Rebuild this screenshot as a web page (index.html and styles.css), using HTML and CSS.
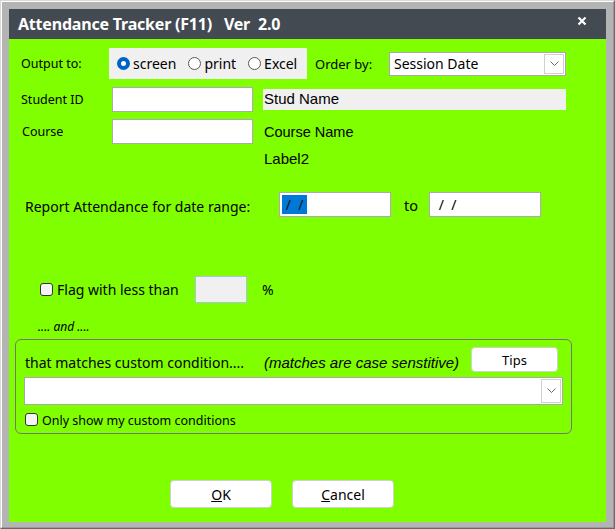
FILE: index.html
```html
<!DOCTYPE html>
<html lang="en">
  <head>
    <meta charset="UTF-8" />
    <title>Attendance Tracker (F11)</title>
    <link rel="stylesheet" href="styles.css">
  </head>
  <body>
    <div class="frame">
      <div class="frame-inner">
        <div class="titlebar">
          <span class="title">Attendance Tracker (F11)&nbsp;&nbsp; Ver&nbsp; 2.0</span>
          <svg class="close" width="10" height="10" viewBox="0 0 10 10">
            <path d="M1.5 1.5 L8.5 8.5 M8.5 1.5 L1.5 8.5" stroke="#fff" stroke-width="2.2" />
          </svg>
        </div>
        <div class="client">
          <div class="row row-output">
            <span class="lbl lbl-output">Output to:</span>
            <div class="radios">
              <span class="radio checked"></span><span class="rtext">screen</span>
              <span class="radio"></span><span class="rtext">print</span>
              <span class="radio"></span><span class="rtext">Excel</span>
            </div>
            <span class="lbl lbl-order">Order by:</span>
            <div class="combo combo-order">
              <span class="combo-text">Session Date</span>
              <span class="drop">
                <svg width="9" height="6" viewBox="0 0 9 6"><path d="M0.5 0.5 L4.5 4.5 L8.5 0.5" fill="none" stroke="#666" stroke-width="1" /></svg>
              </span>
            </div>
          </div>

          <div class="row row-student">
            <span class="lbl lbl-field">Student ID</span>
            <div class="textbox"></div>
            <div class="namebox">Stud Name</div>
          </div>

          <div class="row row-course">
            <span class="lbl lbl-field lbl-course">Course</span>
            <div class="textbox"></div>
            <span class="arial coursename">Course Name</span>
          </div>

          <div class="row row-label2">
            <span class="arial label2">Label2</span>
          </div>

          <div class="row row-date">
            <span class="lbl lbl-date">Report Attendance for date range:</span>
            <div class="datebox"><span class="sel">&nbsp;/&nbsp; /</span></div>
            <span class="lbl lbl-to">to</span>
            <div class="datebox"><span class="plain">&nbsp;/&nbsp; /</span></div>
          </div>

          <div class="row row-flag">
            <span class="check"></span>
            <span class="lbl lbl-flag">Flag with less than</span>
            <div class="pctbox"></div>
            <span class="lbl lbl-pct">%</span>
          </div>

          <div class="row row-and">
            <span class="and">.... and ....</span>
          </div>

          <div class="group">
            <div class="row group-head">
              <span class="lbl lbl-custom">that matches custom condition....</span>
              <span class="arial case">(matches are case senstitive)</span>
              <button class="btn btn-tips">Tips</button>
            </div>
            <div class="combo combo-custom">
              <span class="combo-text"></span>
              <span class="drop">
                <svg width="9" height="6" viewBox="0 0 9 6"><path d="M0.5 0.5 L4.5 4.5 L8.5 0.5" fill="none" stroke="#666" stroke-width="1" /></svg>
              </span>
            </div>
            <div class="row group-check">
              <span class="check small"></span>
              <span class="lbl lbl-only">Only show my custom conditions</span>
            </div>
          </div>

          <div class="row row-buttons">
            <button class="btn btn-main"><u>O</u>K</button>
            <button class="btn btn-main"><u>C</u>ancel</button>
          </div>
        </div>
      </div>
    </div>
  </body>
</html>
```

FILE: styles.css
```css
html,
body {
  margin: 0;
  padding: 0;
  background-color: #b4b4b4;
}

body {
  font-family: "Noto Sans", "Open Sans", sans-serif;
  font-size: 13px;
  color: #000;
}

.frame {
  width: 615px;
  height: 529px;
  box-sizing: border-box;
  border: 1px solid;
  border-color: #d8d8d8 #696969 #696969 #d8d8d8;
}

.frame-inner {
  height: 100%;
  box-sizing: border-box;
  border: 1px solid;
  border-color: #ffffff #9a9a9a #9a9a9a #ffffff;
  padding: 7px 7px 5px 7px;
  background-color: #b4b4b4;
}

.titlebar {
  height: 30px;
  background-color: #434a52;
  display: flex;
  align-items: center;
  justify-content: space-between;
  padding: 0 19px 0 9px;
}

.title {
  color: #fff;
  font-weight: bold;
  font-size: 16px;
  letter-spacing: -0.2px;
}

.close {
  margin-top: -6px;
}

.client {
  height: 483px;
  background-color: #80ff00;
  box-sizing: border-box;
  padding-top: 9px;
}

.row {
  display: flex;
  align-items: center;
}

.lbl {
  white-space: nowrap;
  flex-shrink: 0;
}

.arial {
  font-family: "Liberation Sans", Arial, sans-serif;
  font-size: 15px;
}

/* output row */
.row-output {
  height: 31px;
}

.lbl-output {
  width: 88px;
  margin-left: 12px;
  font-size: 12.5px;
}

.radios {
  width: 198px;
  height: 31px;
  flex-shrink: 0;
  background-color: #f0f0f0;
  display: flex;
  align-items: center;
  box-sizing: border-box;
  padding-left: 8px;
  font-size: 14px;
}

.radio {
  flex-shrink: 0;
  width: 13px;
  height: 13px;
  box-sizing: border-box;
  border: 1px solid #5a5a5a;
  border-radius: 50%;
  background-color: #fff;
  margin-right: 3px;
}

.radio.checked {
  border: 4px solid #0064c4;
  background-color: #fff;
}

.rtext {
  margin-right: 12px;
  white-space: nowrap;
}

.lbl-order {
  margin-left: 8px;
  width: 74px;
}

.combo {
  background-color: #fff;
  border: 1px solid #a8a8a8;
  box-sizing: border-box;
  display: flex;
  align-items: center;
  justify-content: space-between;
}

.combo-order {
  width: 177px;
  height: 24px;
  font-size: 14px;
}

.combo-text {
  padding-left: 4px;
}

.drop {
  flex-shrink: 0;
  width: 20px;
  height: 20px;
  box-sizing: border-box;
  border: 1px solid #d0d0d0;
  margin-right: 1px;
  display: flex;
  align-items: center;
  justify-content: center;
}

/* student / course */
.row-student {
  margin-top: 8px;
  height: 25px;
}

.row-course {
  margin-top: 7px;
  height: 25px;
}

.lbl-field {
  width: 91px;
  margin-left: 12px;
  font-size: 12.5px;
}

.lbl-course {
  margin-left: 13px;
  width: 90px;
}

.textbox {
  width: 141px;
  height: 25px;
  box-sizing: border-box;
  background-color: #fff;
  border: 1px solid #a9a9b8;
}

.namebox {
  margin-left: 10px;
  width: 303px;
  height: 21px;
  background-color: #f0f0f0;
  font-family: "Liberation Sans", Arial, sans-serif;
  font-size: 15px;
  line-height: 20px;
  padding-left: 1px;
  box-sizing: border-box;
}

.coursename {
  margin-left: 11px;
  font-size: 14.5px;
}

.row-label2 {
  margin-top: 4px;
  height: 20px;
}

.label2 {
  margin-left: 255px;
}

/* date range */
.row-date {
  margin-top: 24px;
  height: 25px;
}

.lbl-date {
  margin-left: 16px;
  width: 254px;
  font-size: 14px;
  padding-top: 3px;
}

.datebox {
  width: 112px;
  height: 25px;
  box-sizing: border-box;
  background-color: #fff;
  border: 1px solid #a9a9b8;
  padding: 2px;
  font-size: 14px;
}

.sel {
  display: inline-block;
  background-color: #0078d7;
  color: #111;
  width: 25px;
  height: 19px;
  line-height: 19px;
}

.plain {
  display: inline-block;
  height: 19px;
  line-height: 19px;
  padding-left: 3px;
}

.lbl-to {
  width: 25px;
  margin-left: 13px;
  font-size: 14.5px;
}

/* flag row */
.row-flag {
  margin-top: 59px;
  height: 27px;
}

.check {
  flex-shrink: 0;
  width: 13px;
  height: 13px;
  box-sizing: border-box;
  border: 1px solid #333;
  border-radius: 3px;
  background-color: #f4f4f4;
  margin-left: 31px;
  margin-top: -1px;
}

.lbl-flag {
  margin-left: 4px;
  width: 138px;
  font-size: 14px;
}

.pctbox {
  width: 52px;
  height: 27px;
  box-sizing: border-box;
  background-color: #f0f0f0;
  border: 1px solid #a8c4e4;
}

.lbl-pct {
  margin-left: 15px;
  font-size: 14px;
}

.row-and {
  margin-top: 13px;
  height: 20px;
}

.and {
  margin-left: 29px;
  font-style: italic;
  font-size: 12px;
}

/* custom condition group */
.group {
  margin-top: 3px;
  margin-left: 6px;
  width: 557px;
  height: 95px;
  box-sizing: border-box;
  border: 1px solid #777;
  border-radius: 6px;
  padding: 7px 0 0 8px;
}

.group-head {
  height: 25px;
}

.lbl-custom {
  font-size: 14px;
  width: 239px;
  margin-left: 1px;
  margin-top: 6px;
}

.case {
  font-style: italic;
  width: 207px;
  margin-top: 6px;
}

.btn {
  font-family: "Noto Sans", "Open Sans", sans-serif;
  background-color: #fff;
  border: 1px solid #d0d0d0;
  border-radius: 4px;
  color: #000;
  padding: 0;
}

.btn-tips {
  width: 87px;
  height: 25px;
  font-size: 13px;
}

.combo-custom {
  margin-top: 5px;
  width: 539px;
  height: 28px;
}

.combo-custom .drop {
  height: 24px;
}

.group-check {
  margin-top: 6px;
  height: 18px;
}

.check.small {
  margin-left: 1px;
}

.lbl-only {
  margin-left: 4px;
  font-size: 12.5px;
}

/* bottom buttons */
.row-buttons {
  margin-top: 46px;
  margin-left: 161px;
  gap: 20px;
}

.btn-main {
  width: 102px;
  height: 28px;
  font-size: 14px;
}
```
